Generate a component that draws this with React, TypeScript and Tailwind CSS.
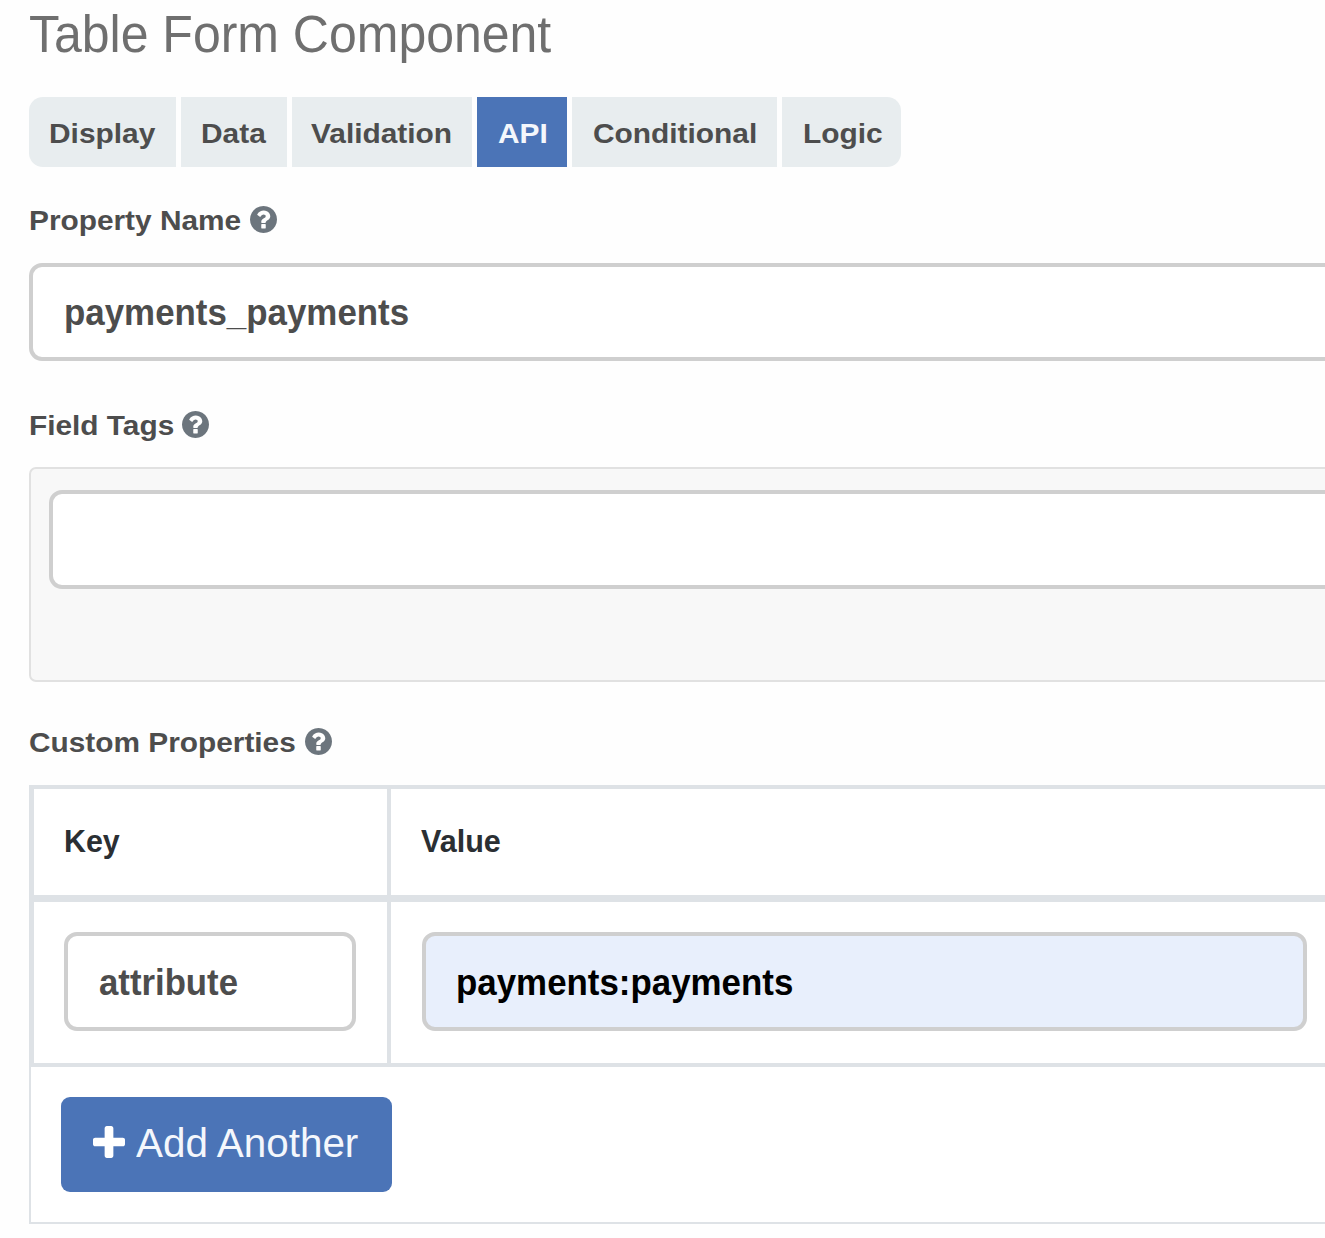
const tabs = [
  { name: 'Display', box: 'w-[147px] rounded-l-[14px] pl-[19.5px]' },
  { name: 'Data', box: 'w-[106px] pl-[19.5px]' },
  { name: 'Validation', box: 'w-[180px] pl-[18.5px]' },
  { name: 'API', box: 'w-[90px] pl-[20.5px]', active: true },
  { name: 'Conditional', box: 'w-[205px] pl-[20.5px]' },
  { name: 'Logic', box: 'w-[119px] rounded-r-[14px] pl-[20.5px]' },
];

function HelpIcon() {
  return (
    <svg className="mb-px h-[27px] w-[27px] shrink-0 fill-[#6c757d]" viewBox="128 128 1536 1536">
      <path d="M1024 1376v-192q0-14-9-23t-23-9h-192q-14 0-23 9t-9 23v192q0 14 9 23t23 9h192q14 0 23-9t9-23zm256-672q0-88-55.5-163t-138.5-116-170-41q-243 0-371 213-15 24 8 42l132 100q7 6 19 6 16 0 25-12 53-68 86-92 34-24 86-24 48 0 85.5 26t37.5 59q0 38-20 61t-68 45q-63 28-115.5 86.5t-52.5 125.5v36q0 14 9 23t23 9h192q14 0 23-9t9-23q0-19 21.5-49.5t54.5-49.5q32-18 49-28.5t46-35 44.5-48 28-60.5 12.5-81zm384 192q0 209-103 385.5t-279.5 279.5-385.5 103-385.5-103-279.5-279.5-103-385.5 103-385.5 279.5-279.5 385.5-103 385.5 103 279.5 279.5 103 385.5z" />
    </svg>
  );
}

function PlusIcon() {
  return (
    <svg className="mb-[3px] h-8 w-8 shrink-0 fill-white" viewBox="192 128 1408 1408">
      <path d="M1600 736v192q0 40-28 68t-68 28h-416v416q0 40-28 68t-68 28h-192q-40 0-68-28t-28-68v-416h-416q-40 0-68-28t-28-68v-192q0-40 28-68t68-28h416v-416q0-40 28-68t68-28h192q40 0 68 28t28 68v416h416q40 0 68 28t28 68z" />
    </svg>
  );
}

function Label({ text, width, className }: { text: string; width: string; className: string }) {
  return (
    <div className={`flex h-8 items-center ${className}`}>
      <span className={`mt-px shrink-0 text-[28px] leading-8 font-bold whitespace-nowrap ${width}`}>
        <span className="inline-block origin-left scale-x-[1.065]">{text}</span>
      </span>
      <HelpIcon />
    </div>
  );
}

export default function App() {
  return (
    <div className="h-[1238px] w-full overflow-hidden bg-[#fefefe] pl-[29px] font-['Liberation_Sans',Arial,sans-serif] text-[#4d4d4d]">
      <h1 className="h-[97px] w-max origin-left scale-x-[0.98] pt-[6px] text-[51px] leading-[58px] whitespace-nowrap text-[#6f6f6f]">
        Table Form Component
      </h1>

      <nav className="flex h-[70px] gap-[5px]">
        {tabs.map((t) => (
          <button
            key={t.name}
            className={`flex items-center pt-[3px] text-[28px] leading-8 font-bold whitespace-nowrap ${t.box} ${
              t.active ? 'bg-[#4b74b7] text-[#f4f7fc]' : 'bg-[#e8edef]'
            }`}
          >
            <span className="origin-left scale-x-[1.067]">{t.name}</span>
          </button>
        ))}
      </nav>

      <Label text="Property Name" width="w-[221px]" className="mt-[37px]" />
      <div className="mt-[27px] -mr-5 flex h-[98px] items-center rounded-[13px] border-4 border-[#cfcfcf] bg-white pt-0.5 pl-[31px] text-[36px] font-bold">
        <span className="origin-left scale-x-[0.969]">payments_payments</span>
      </div>

      <Label text="Field Tags" width="w-[153px]" className="mt-[48px]" />
      <div className="mt-[26px] -mr-5 h-[215px] rounded-[7px] border-2 border-[#e1e1e1] bg-[#f8f8f8] pt-[21px] pl-[18px]">
        <div className="h-[99px] rounded-[13px] border-4 border-[#cfcfcf] bg-white" />
      </div>

      <Label text="Custom Properties" width="w-[276px]" className="mt-[44px]" />
      <div className="mt-[27px] border-t-[4px] border-l-[5px] border-[#dee2e6] bg-white text-[#2b2f33]">
        <div className="flex h-[113px] border-b-[7px] border-[#dee2e6] text-[31px] font-bold">
          <div className="flex w-[357px] shrink-0 items-center border-r-4 border-[#dee2e6] pl-[30px]">
            <span className="origin-left scale-x-[0.98]">Key</span>
          </div>
          <div className="flex items-center pl-[30px]">
            <span className="origin-left scale-x-[0.985]">Value</span>
          </div>
        </div>
        <div className="flex h-[165px] border-b-[4px] border-[#dee2e6] text-[36px] font-bold">
          <div className="w-[357px] shrink-0 border-r-4 border-[#dee2e6] pt-[30px] pl-[30px]">
            <div className="flex h-[99px] w-[292px] items-center rounded-[13px] border-4 border-[#cfcfcf] bg-white pt-0.5 pl-[31px] text-[#4d4d4d]">
              <span className="origin-left scale-x-[0.965]">attribute</span>
            </div>
          </div>
          <div className="pt-[30px] pl-[31px]">
            <div className="flex h-[99px] w-[885px] items-center rounded-[13px] border-4 border-[#cfcfcf] bg-[#e8effc] pt-0.5 pl-[30px] text-black">
              <span className="origin-left scale-x-[0.969]">payments:payments</span>
            </div>
          </div>
        </div>
      </div>
      <div className="h-[157px] border-b-2 border-l-2 border-[#dee2e6] bg-white pt-[30px] pl-[30px]">
        <button className="flex h-[95px] w-[331px] items-center rounded-[9px] bg-[#4b74b7] pb-0.5 pl-8 text-[41px] whitespace-nowrap text-[#f4f7fc]">
          <PlusIcon />
          <span className="ml-[11px] origin-left scale-x-[0.985]">Add Another</span>
        </button>
      </div>
    </div>
  );
}
